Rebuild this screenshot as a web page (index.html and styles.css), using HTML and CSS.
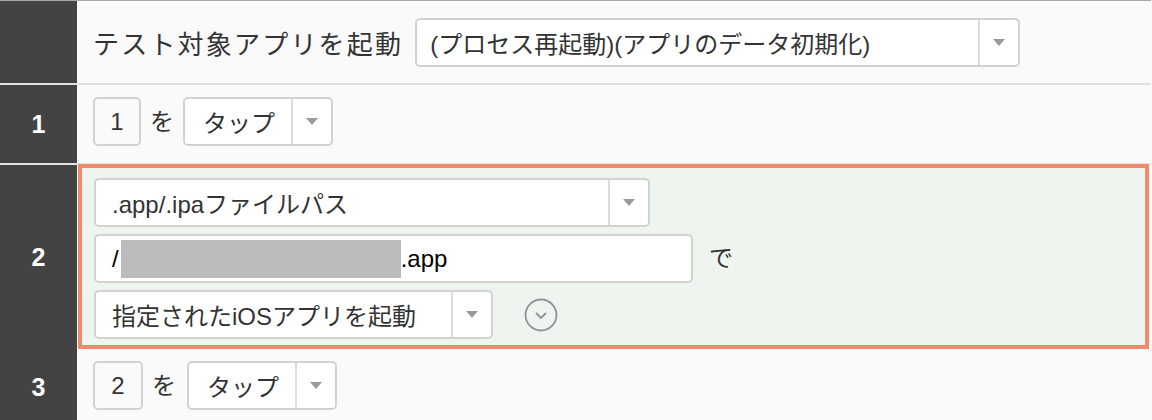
FILE: index.html
```html
<!DOCTYPE html>
<html lang="ja">
<head>
  <meta charset="UTF-8" />
  <title>テストシナリオ</title>
  <link rel="stylesheet" href="styles.css">
</head>
<body>

  <div class="steps">

    <!-- start row -->
    <div class="step step-head">
      <div class="step-no"></div>
      <div class="step-body">
        <span class="label">テスト対象アプリを起動</span>
        <div class="select select-wide">
          <span class="select-text">(プロセス再起動)(アプリのデータ初期化)</span>
          <span class="select-arrow"></span>
        </div>
      </div>
    </div>

    <!-- step 1 -->
    <div class="step step-1">
      <div class="step-no">1</div>
      <div class="step-body">
        <span class="num-box">1</span>
        <span class="word">を</span>
        <div class="select select-tap">
          <span class="select-text">タップ</span>
          <span class="select-arrow"></span>
        </div>
      </div>
    </div>

    <!-- step 2 (selected) -->
    <div class="step step-2">
      <div class="step-no">2</div>
      <div class="step-body active">
        <div class="line">
          <div class="select select-path">
            <span class="select-text">.app/.ipaファイルパス</span>
            <span class="select-arrow"></span>
          </div>
        </div>
        <div class="line">
          <div class="text-input">/<span class="redact"></span>.app</div>
          <span class="word de">で</span>
        </div>
        <div class="line">
          <div class="select select-action">
            <span class="select-text">指定されたiOSアプリを起動</span>
            <span class="select-arrow"></span>
          </div>
          <svg class="expand" width="34" height="34" viewBox="0 0 34 34">
            <circle cx="17" cy="17" r="15.5" fill="none" stroke="#929292" stroke-width="1.8"/>
            <path d="M12 15 L17 20 L22 15" fill="none" stroke="#929292" stroke-width="1.8"/>
          </svg>
        </div>
      </div>
    </div>

    <!-- step 3 -->
    <div class="step step-3">
      <div class="step-no">3</div>
      <div class="step-body">
        <span class="num-box">2</span>
        <span class="word">を</span>
        <div class="select select-tap">
          <span class="select-text">タップ</span>
          <span class="select-arrow"></span>
        </div>
      </div>
    </div>

  </div>

</body>
</html>
```

FILE: styles.css
```css
* {
  box-sizing: border-box;
  margin: 0;
  padding: 0;
}

body {
  font-family: 'Liberation Sans', 'Noto Sans CJK JP', sans-serif;
  background-color: #fafafa;
  color: #333;
  font-size: 24px;
  overflow: hidden;
}

.steps {
  width: 1151px;
  border-top: 1px solid #a8a8a8;
}

.step {
  display: flex;
  border-bottom: 2px solid #e2e2e2;
}

.step-no {
  width: 77px;
  flex-shrink: 0;
  background-color: #434343;
  color: #fff;
  font-weight: bold;
  font-size: 25px;
  display: flex;
  align-items: center;
  justify-content: center;
}

.step-body {
  flex: 1;
  display: flex;
  align-items: center;
  padding-left: 16px;
}

.step-head {
  height: 84px;
}

.step-1 {
  height: 80px;
}

.step-1 .step-body,
.step-3 .step-body {
  align-items: flex-start;
  padding-top: 12px;
}

.step-2 {
  height: 184px;
  border-bottom: none;
}

.step-3 {
  height: 90px;
  border-bottom: none;
}

.step-3 .step-no {
  align-items: flex-start;
  padding-top: 24px;
}

.label {
  font-size: 26px;
  letter-spacing: 2.2px;
  margin-right: 12px;
}

.word {
  margin: 0 9px;
  line-height: 49px;
}

.num-box {
  width: 48px;
  height: 49px;
  border: 2px solid #d2d2d2;
  border-radius: 5px;
  display: flex;
  align-items: center;
  justify-content: center;
}

.step-3 .num-box {
  width: 50px;
}

/* fake select */
.select {
  display: flex;
  height: 49px;
  background: #fff;
  border: 2px solid #d2d2d2;
  border-radius: 5px;
}

.select-text {
  flex: 1;
  display: flex;
  align-items: center;
  padding: 0 16px;
  white-space: nowrap;
  overflow: hidden;
}

.select-arrow {
  width: 40px;
  border-left: 2px solid #dcdcdc;
  display: flex;
  align-items: center;
  justify-content: center;
}

.select-arrow:after {
  content: '';
  border-left: 6px solid transparent;
  border-right: 6px solid transparent;
  border-top: 7px solid #9a9a9a;
}

.select-wide {
  width: 605px;
}

.select-wide .select-text {
  padding-left: 13px;
}

.select-tap {
  width: 150px;
}

.select-tap .select-text {
  padding: 0 18px;
}

.step-3 .select-tap {
  width: 150px;
  margin-left: 2px;
}

.select-path {
  width: 556px;
}

.select-action {
  width: 399px;
}

/* selected step */
.step-body.active {
  flex-direction: column;
  align-items: flex-start;
  justify-content: flex-start;
  margin-left: 1px;
  border: 4px solid #ef8a6b;
  background-color: #eef5ee;
  padding: 10px 0 0 12px;
  gap: 7px;
  height: 185px;
  margin-top: -1px;
  margin-right: 2px;
}

.line {
  display: flex;
  align-items: center;
}

.text-input {
  width: 599px;
  height: 49px;
  background: #fff;
  border: 2px solid #d2d2d2;
  border-radius: 5px;
  color: #000;
  display: flex;
  align-items: center;
  padding-left: 16px;
}

.redact {
  display: inline-block;
  width: 280px;
  height: 38px;
  background-color: #bbb;
  margin-left: 2px;
}

.de {
  margin-left: 16px;
}

.expand {
  margin-left: 31px;
}
```
